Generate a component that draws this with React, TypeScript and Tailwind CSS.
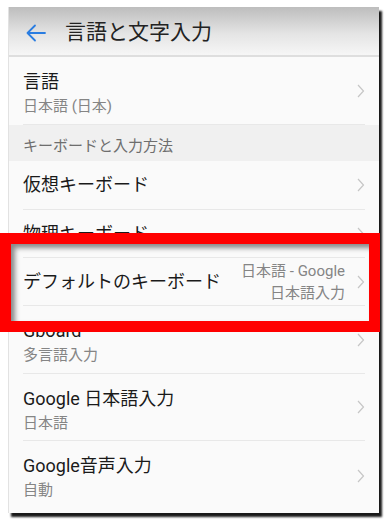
const Chevron = () => (
  <svg width="8" height="14" viewBox="0 0 8 14" className="shrink-0">
    <polyline points="1,1 6.5,7 1,13" fill="none" stroke="#c6c6c6" strokeWidth="1.2" />
  </svg>
);

type Row = {
  title: string;
  sub?: string;
  value?: [string, string];
  h: string;
  last?: boolean;
};

const topRow: Row = { title: "言語", sub: "日本語 (日本)", h: "h-[68px]" };

const keyboardRows: Row[] = [
  { title: "仮想キーボード", h: "h-[49px]" },
  { title: "物理キーボード", h: "h-[48px]" },
  { title: "デフォルトのキーボード", value: ["日本語 - Google", "日本語入力"], h: "h-[48px]" },
  { title: "Gboard", sub: "多言語入力", h: "h-[68px]" },
  { title: "Google 日本語入力", sub: "日本語", h: "h-[67px]" },
  { title: "Google音声入力", sub: "自動", h: "h-[69px]", last: true },
];

function SettingRow({ row }: { row: Row }) {
  return (
    <div
      className={`mx-[14px] flex ${row.h} justify-between ${
        row.sub ? "items-start pt-[14px]" : "items-center"
      } ${row.last ? "" : "border-b border-[#e8e8e8]"}`}
    >
      <div className="flex flex-col">
        <span className="text-[18px] leading-[22px] text-[#1a1a1a]">{row.title}</span>
        {row.sub && (
          <span className="mt-[2px] text-[15px] leading-[22px] text-[#858585]">{row.sub}</span>
        )}
      </div>
      <div className={`flex items-center gap-[12px] ${row.sub ? "self-center -mt-[14px]" : ""}`}>
        {row.value && (
          <div className="flex flex-col items-end text-[15px] leading-[22px] text-[#858585]">
            <span>{row.value[0]}</span>
            <span>{row.value[1]}</span>
          </div>
        )}
        <Chevron />
      </div>
    </div>
  );
}

export default function App() {
  return (
    <div className="relative h-[523px] w-[387px] overflow-hidden bg-white pl-[8px] pt-[7px] font-['Roboto','Noto_Sans_CJK_JP',sans-serif]">
      <div className="h-[506px] w-[371px] border-l border-[#e2e2e2] bg-[#fafafa] shadow-[3px_4px_2px_rgba(0,0,0,0.9)]">
        <header className="flex h-[50px] items-center border-b-2 border-[#dedede] bg-[linear-gradient(180deg,#bdbdbd_0%,#e4e4e4_55%,#f6f6f6_100%)] pt-[3px]">
          <svg width="22" height="18" viewBox="0 0 22 18" className="ml-[16px]">
            <path d="M20 9H2.5M10 1.5L2.5 9l7.5 7.5" fill="none" stroke="#2a7de1" strokeWidth="1.8" strokeLinecap="round" strokeLinejoin="round" />
          </svg>
          <h1 className="ml-[18px] text-[21px] font-normal leading-none text-[#222]">言語と文字入力</h1>
        </header>

        <SettingRow row={topRow} />

        <div className="h-[36px] bg-[#f0f0f0] pl-[14px] pt-[10px] text-[15px] leading-[22px] text-[#6e6e6e]">
          キーボードと入力方法
        </div>

        {keyboardRows.map((row) => (
          <SettingRow key={row.title} row={row} />
        ))}
      </div>

      <div className="absolute left-0 top-[233px] h-[99px] w-[380px] border-[11px] border-[#ff0000] shadow-[inset_4px_4px_5px_rgba(0,0,0,0.45)]" />
    </div>
  );
}
